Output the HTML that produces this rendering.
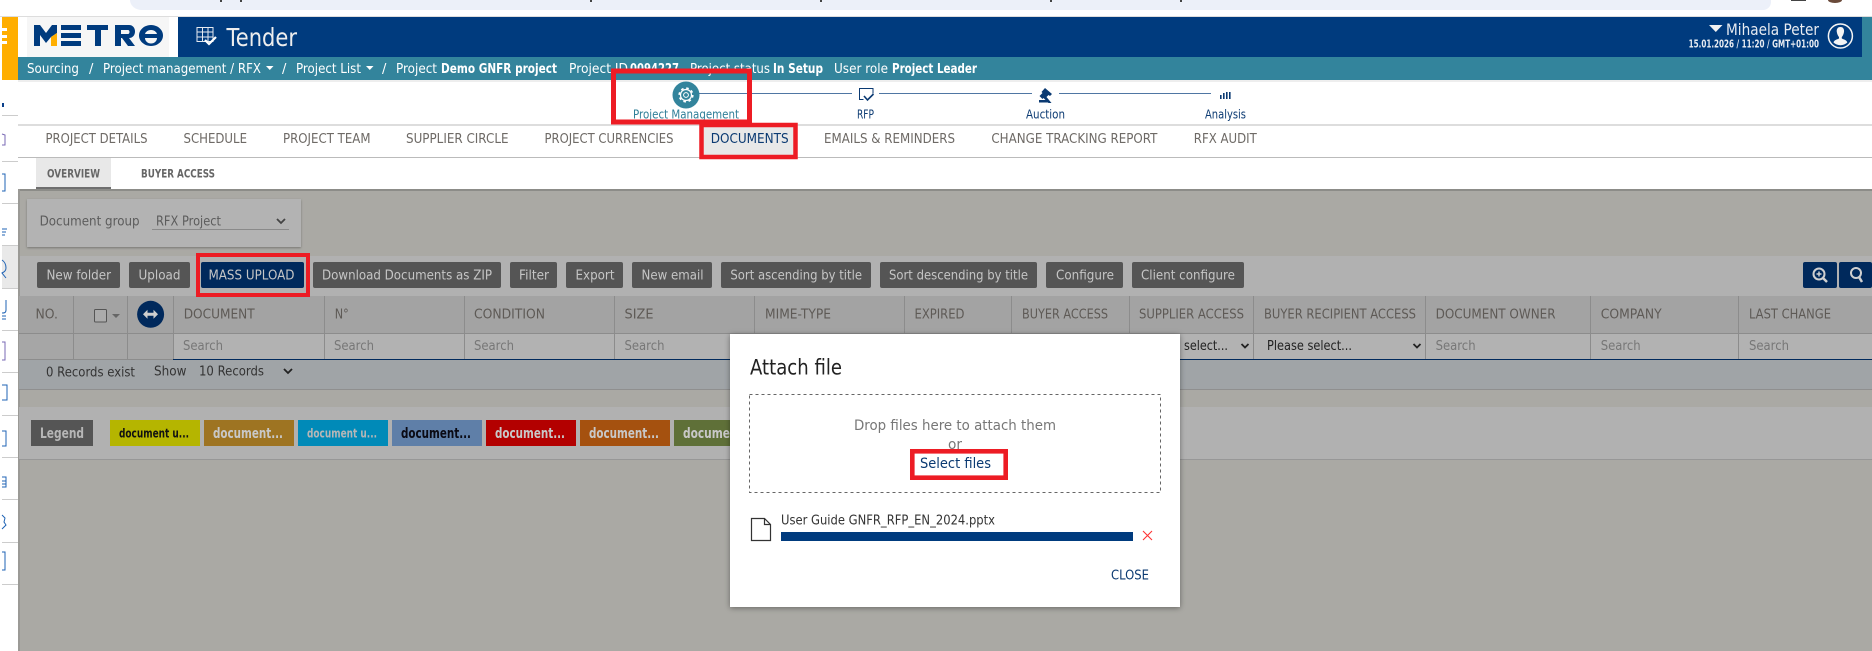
<!DOCTYPE html>
<html lang="en"><head><meta charset="utf-8"><title>Tender</title>
<style>
html,body{margin:0;padding:0;background:#fff;width:1872px;height:651px;overflow:hidden}
svg{display:block}
text{font-family:"DejaVu Sans","Liberation Sans",sans-serif;white-space:pre}
.t{font-size:13px;fill:#fff}
.b{font-weight:bold}
.tab{font-size:13px;fill:#6e6a66}
.btn{font-size:13.5px;fill:#c6c6c6}
.h{font-size:13px;fill:#5e5a56}
.s{font-size:13px;fill:#777}
.st{font-size:12px;fill:#0b3a72}
.blk{font-size:13.5px;fill:#333}
</style></head><body>
<svg width="1872" height="651" viewBox="0 0 1872 651" xmlns="http://www.w3.org/2000/svg">
<defs>
<filter id="m" x="-10%" y="-10%" width="120%" height="120%"><feDropShadow dx="0" dy="1" stdDeviation="3" flood-color="#000" flood-opacity=".4"/></filter>
<filter id="c" x="-5%" y="-10%" width="110%" height="125%"><feDropShadow dx="0" dy="1" stdDeviation="1" flood-color="#000" flood-opacity=".3"/></filter>
</defs>
<rect width="1872" height="651" fill="#fff"/>
<!-- browser strip -->
<path d="M130 0H1771V2a8 8 0 0 1-8 8H142a12 10 0 0 1-12-10z" fill="#ecf0f9"/>
<rect x="220" y="0" width="2" height="2" fill="#444"/><rect x="240" y="0" width="2" height="2" fill="#444"/>
<rect x="590" y="0" width="2" height="2" fill="#444"/><rect x="820" y="0" width="2" height="2" fill="#444"/><rect x="1050" y="0" width="2" height="2" fill="#444"/><rect x="1180" y="0" width="2" height="2" fill="#444"/>
<rect x="1791" y="0" width="15" height="1" fill="#444"/>
<path d="M1828 0h14a7 3 0 0 1-14 0z" fill="#6a4a3a"/>
<rect x="0" y="16" width="1872" height="1" fill="#ddd"/>

<!-- left rail -->
<rect x="0" y="17" width="2" height="634" fill="#fff"/>
<rect x="2" y="17" width="16" height="63" fill="#ffae00"/>
<rect x="2" y="28" width="5" height="3" fill="#fff"/><rect x="2" y="35" width="5" height="3" fill="#fff"/><rect x="2" y="41" width="5" height="3" fill="#fff"/>
<rect x="2" y="245" width="16" height="43" fill="#e9e9e9"/>
<g fill="#ccc">
<rect x="2" y="115" width="16" height="1"/><rect x="2" y="161" width="16" height="1"/><rect x="2" y="203" width="16" height="1"/><rect x="2" y="245" width="16" height="1"/><rect x="2" y="288" width="16" height="1"/><rect x="2" y="330" width="16" height="1"/><rect x="2" y="372" width="16" height="1"/><rect x="2" y="415" width="16" height="1"/><rect x="2" y="457" width="16" height="1"/><rect x="2" y="499" width="16" height="1"/><rect x="2" y="542" width="16" height="1"/><rect x="2" y="584" width="16" height="1"/>
</g>
<g fill="none" stroke="#1f63b5" stroke-width="1">
<path d="M2 134l3 1v10h-3" stroke="#7a6ab5"/>
<path d="M2 174h3v17h-3"/>
<path d="M2 229h5M2 232h4M2 235h3"/>
<path d="M2 260c3 2 4 5 4 8s-2 4-4 5l4 5"/>
<path d="M6 300v10c0 3-2 3-4 3M2 316h4M2 319h4"/>
<path d="M2 342h3v18h-3" stroke="#7a6ab5"/>
<path d="M2 385h5v15h-5"/>
<path d="M2 431h4v15h-4"/>
<path d="M2 477h4v10h-4M2 481h4M2 484h4"/>
<path d="M2 515l3 3-1 4 2 3-4 4"/>
<path d="M2 552h3v18h-3"/>
</g>
<rect x="2" y="103" width="2" height="4" fill="#0a3f8a"/>

<!-- header -->
<rect x="18" y="17" width="160" height="40" fill="#fff"/>
<rect x="27" y="17" width="142" height="40" fill="#f6f6f6"/>
<rect x="178" y="17" width="1684" height="40" fill="#003b7e"/>
<rect x="1862" y="17" width="10" height="40" fill="#33849c"/>
<!-- METRO logo -->
<g fill="#003b7e">
<path d="M34 46V25h6l6 8 6-8h5v8h0l-6 4-5 6-6-8v11z"/>
<rect x="61" y="25" width="20" height="5"/><rect x="61" y="33" width="20" height="5"/><rect x="61" y="41" width="20" height="5"/>
<rect x="87" y="25" width="21" height="5"/><rect x="95" y="25" width="6" height="21"/>
<path d="M115 25h14c8 0 8 13 0 13l6 8h-7l-6-8h-1v8h-6zM121 30v4h7c2 0 2-4 0-4z" fill-rule="evenodd"/>
<path d="M151 25a12 10.500 0 1 0 .01 0zM151 30a6 5.500 0 0 0-6 4h12a6 5.500 0 0 0-6-4zm-6 8a6 5.500 0 0 0 12 0z" fill-rule="evenodd"/>
</g>
<path d="M51 46V37l6-4v13z" fill="#ffae00"/>
<!-- Tender icon -->
<g fill="none" stroke="#e6eaf0" stroke-width="1">
<path d="M197 27.500h16v14h-16zM202.500 27.500v14M208 27.500v14M197 32h16M197 37h16"/>
</g>
<path d="M205 40l4 4 7-7" fill="none" stroke="#fff" stroke-width="2.200"/>
<text x="226.500" y="46" font-size="25" fill="#eee" textLength="70.500" lengthAdjust="spacingAndGlyphs">Tender</text>
<path d="M1709 25h13.500l-6.700 7z" fill="#f2f2f2"/>
<text x="1726" y="35" font-size="16" fill="#e8ecf2" textLength="93" lengthAdjust="spacingAndGlyphs">Mihaela Peter</text>
<text x="1688.600" y="47.500" font-size="11" font-weight="bold" fill="#e8ecf2" textLength="130.400" lengthAdjust="spacingAndGlyphs">15.01.2026 / 11:20 / GMT+01:00</text>
<circle cx="1840.400" cy="36" r="12" fill="none" stroke="#f4f4f4" stroke-width="1.500"/>
<path d="M1840.400 27c-3 0-4 2.500-3.600 5 .3 2 1.200 4 2.200 5v1.500c-2 1-5 1.500-5.500 4a10 10 0 0 0 13.800 0c-.5-2.500-3.500-3-5.500-4V37c1-1 1.900-3 2.200-5 .4-2.500-.6-5-3.600-5z" fill="#f4f4f4"/>

<!-- breadcrumb -->
<rect x="18" y="57" width="1854" height="23" fill="#33849c"/>
<g class="t">
<text class="t" x="27" y="73" textLength="52" lengthAdjust="spacingAndGlyphs">Sourcing</text>
<text class="t" x="89" y="73">/</text>
<text class="t" x="103" y="73" textLength="158" lengthAdjust="spacingAndGlyphs">Project management / RFX</text>
<path d="M266 66h7.500l-3.700 4z" fill="#fff"/>
<text class="t" x="282" y="73">/</text>
<text class="t" x="296" y="73" textLength="65" lengthAdjust="spacingAndGlyphs">Project List</text>
<path d="M366 66h7.500l-3.700 4z" fill="#fff"/>
<text class="t" x="382" y="73">/</text>
<text class="t" x="396" y="73" textLength="41" lengthAdjust="spacingAndGlyphs">Project</text>
<text class="t b" x="441" y="73" textLength="116" lengthAdjust="spacingAndGlyphs">Demo GNFR project</text>
<text class="t" x="569" y="73" textLength="59" lengthAdjust="spacingAndGlyphs">Project ID</text>
<text class="t b" x="630" y="73" textLength="49" lengthAdjust="spacingAndGlyphs">0094227</text>
<text class="t" x="690" y="73" textLength="80" lengthAdjust="spacingAndGlyphs">Project status</text>
<text class="t b" x="773" y="73" textLength="50" lengthAdjust="spacingAndGlyphs">In Setup</text>
<text class="t" x="834" y="73" textLength="54" lengthAdjust="spacingAndGlyphs">User role</text>
<text class="t b" x="892" y="73" textLength="85" lengthAdjust="spacingAndGlyphs">Project Leader</text>
</g>
<rect x="18" y="80" width="1854" height="2" fill="#eee"/>

<!-- stepper -->
<g stroke="#4f76a3" stroke-width="1">
<line x1="698" y1="93.500" x2="852" y2="93.500"/><line x1="879" y1="93.500" x2="1032" y2="93.500"/><line x1="1059" y1="93.500" x2="1211" y2="93.500"/>
</g>
<circle cx="686" cy="95" r="13.500" fill="#33849c"/>
<circle cx="686" cy="95" r="5.500" fill="none" stroke="#fff" stroke-width="1.200"/>
<circle cx="686" cy="95" r="6.800" fill="none" stroke="#fff" stroke-width="1.600" stroke-dasharray="2.600 2.740"/>
<circle cx="686" cy="95" r="2.400" fill="none" stroke="#fff" stroke-width="1"/>
<path d="M869 88.500h-9.500v11h4M869 88.500h4v5" fill="none" stroke="#0b3a72" stroke-width="1"/>
<path d="M864 96l3.500 4 6-6" fill="none" stroke="#0b3a72" stroke-width="1.600"/>
<path d="M1045 88l7 6-2 2-1.500-1-2 2 5 6h-3l-5-5-1 1-3-3 3-3-1-1z" fill="#0b3a72"/>
<rect x="1039" y="100" width="9" height="2.500" fill="#0b3a72"/>
<g fill="#0b3a72"><rect x="1220" y="95" width="1.600" height="4"/><rect x="1223" y="93" width="1.600" height="6"/><rect x="1226" y="92" width="1.600" height="7"/><rect x="1229" y="92" width="1.600" height="7"/></g>
<text class="st" x="633" y="118.500" style="fill:#2f7f98" textLength="106" lengthAdjust="spacingAndGlyphs">Project Management</text>
<text class="st" x="857" y="118.500" textLength="17" lengthAdjust="spacingAndGlyphs">RFP</text>
<text class="st" x="1026" y="118.500" textLength="39" lengthAdjust="spacingAndGlyphs">Auction</text>
<text class="st" x="1205" y="118.500" textLength="41" lengthAdjust="spacingAndGlyphs">Analysis</text>

<rect x="18" y="124" width="1854" height="2" fill="#ddd"/>
<!-- tabs -->
<rect x="703" y="127" width="91" height="28" fill="#e8e8e8"/>
<g>
<text class="tab" x="45.500" y="143" textLength="102" lengthAdjust="spacingAndGlyphs">PROJECT DETAILS</text>
<text class="tab" x="183.500" y="143" textLength="63.500" lengthAdjust="spacingAndGlyphs">SCHEDULE</text>
<text class="tab" x="283" y="143" textLength="87.500" lengthAdjust="spacingAndGlyphs">PROJECT TEAM</text>
<text class="tab" x="406" y="143" textLength="102.500" lengthAdjust="spacingAndGlyphs">SUPPLIER CIRCLE</text>
<text class="tab" x="544.500" y="143" textLength="129" lengthAdjust="spacingAndGlyphs">PROJECT CURRENCIES</text>
<text class="tab" x="710.700" y="143" style="fill:#0b3a72" textLength="78" lengthAdjust="spacingAndGlyphs">DOCUMENTS</text>
<text class="tab" x="824" y="143" textLength="131" lengthAdjust="spacingAndGlyphs">EMAILS &amp; REMINDERS</text>
<text class="tab" x="991.400" y="143" textLength="166" lengthAdjust="spacingAndGlyphs">CHANGE TRACKING REPORT</text>
<text class="tab" x="1193.800" y="143" textLength="63" lengthAdjust="spacingAndGlyphs">RFX AUDIT</text>
</g>
<rect x="18" y="157" width="1854" height="1" fill="#bbb"/>
<!-- sub tabs -->
<rect x="36" y="158" width="75" height="29" fill="#e8e8e8"/>
<rect x="36" y="187" width="75" height="2" fill="#6f6f6f"/>
<text x="47" y="177.300" font-size="11.500" font-weight="bold" fill="#666" textLength="53" lengthAdjust="spacingAndGlyphs">OVERVIEW</text>
<text x="141" y="177.300" font-size="11.500" font-weight="bold" fill="#666" textLength="74" lengthAdjust="spacingAndGlyphs">BUYER ACCESS</text>

<!-- overlay -->
<rect x="18" y="189" width="1854" height="462" fill="#aaa9a4"/>
<rect x="18" y="189" width="1854" height="2" fill="#8c8c88"/>
<rect x="18" y="189" width="2" height="462" fill="#9b9a96"/>
<!-- doc group -->
<rect x="27" y="199" width="274" height="48" fill="#b3b3b3" filter="url(#c)"/>
<text x="39.600" y="225.500" font-size="13.500" fill="#5c5c5c" textLength="100" lengthAdjust="spacingAndGlyphs">Document group</text>
<text x="156" y="225.500" font-size="13.500" fill="#5c5c5c" textLength="65" lengthAdjust="spacingAndGlyphs">RFX Project</text>
<rect x="152" y="229" width="137" height="1" fill="#8a8a8a"/>
<path d="M277 219l4 4 4-4" fill="none" stroke="#444" stroke-width="1.800"/>

<!-- toolbar -->
<rect x="20" y="256" width="1852" height="40" fill="#b1b1b1"/>
<g fill="#555">
<rect x="37" y="262" width="83" height="26" rx="2"/><rect x="129" y="262" width="61" height="26" rx="2"/>
<rect x="313" y="262" width="188" height="26" rx="2"/><rect x="510" y="262" width="47" height="26" rx="2"/><rect x="566" y="262" width="57" height="26" rx="2"/><rect x="632" y="262" width="80" height="26" rx="2"/><rect x="721" y="262" width="150" height="26" rx="2"/><rect x="880" y="262" width="157" height="26" rx="2"/><rect x="1046" y="262" width="77" height="26" rx="2"/><rect x="1132" y="262" width="112" height="26" rx="2"/>
</g>
<rect x="201" y="262" width="103" height="26" rx="2" fill="#00295c"/>
<text class="btn" x="46.500" y="279.700" textLength="64.500" lengthAdjust="spacingAndGlyphs">New folder</text>
<text class="btn" x="138.500" y="279.700" textLength="42" lengthAdjust="spacingAndGlyphs">Upload</text>
<text class="btn" x="208.500" y="279.700" textLength="86" lengthAdjust="spacingAndGlyphs">MASS UPLOAD</text>
<text class="btn" x="322" y="279.700" textLength="170" lengthAdjust="spacingAndGlyphs">Download Documents as ZIP</text>
<text class="btn" x="519" y="279.700" textLength="30" lengthAdjust="spacingAndGlyphs">Filter</text>
<text class="btn" x="575.500" y="279.700" textLength="39" lengthAdjust="spacingAndGlyphs">Export</text>
<text class="btn" x="641.500" y="279.700" textLength="62" lengthAdjust="spacingAndGlyphs">New email</text>
<text class="btn" x="730.400" y="279.700" textLength="131.600" lengthAdjust="spacingAndGlyphs">Sort ascending by title</text>
<text class="btn" x="889" y="279.700" textLength="139" lengthAdjust="spacingAndGlyphs">Sort descending by title</text>
<text class="btn" x="1056" y="279.700" textLength="58" lengthAdjust="spacingAndGlyphs">Configure</text>
<text class="btn" x="1141" y="279.700" textLength="94" lengthAdjust="spacingAndGlyphs">Client configure</text>
<rect x="1803" y="262" width="34" height="26" rx="2" fill="#00295c"/>
<rect x="1839" y="262" width="33" height="26" rx="2" fill="#00295c"/>
<circle cx="1819" cy="274" r="5.500" fill="none" stroke="#d0d0d0" stroke-width="2"/>
<path d="M1816.500 274h5M1819 271.500v5" stroke="#d0d0d0" stroke-width="1.500"/>
<path d="M1823 278l4 4" stroke="#d0d0d0" stroke-width="2.500"/>
<circle cx="1856" cy="273" r="5" fill="none" stroke="#d0d0d0" stroke-width="2"/>
<path d="M1859 277l3 5" stroke="#d0d0d0" stroke-width="2.500"/>

<!-- table -->
<rect x="19" y="296" width="1853" height="37" fill="#a3a3a3"/>
<rect x="19" y="333" width="154" height="26" fill="#a6a6a6"/>
<rect x="173" y="333" width="1699" height="26" fill="#b2b2b2"/>
<rect x="19" y="333" width="1853" height="1" fill="#8c8c8c"/>
<rect x="173" y="359" width="1699" height="1" fill="#00295c"/>
<rect x="19" y="359" width="154" height="1" fill="#8c8c8c"/>
<g fill="#8c8c8c">
<rect x="73" y="296" width="1" height="63"/><rect x="127" y="296" width="1" height="63"/><rect x="173" y="296" width="1" height="63"/><rect x="324" y="296" width="1" height="63"/><rect x="464" y="296" width="1" height="63"/><rect x="614" y="296" width="1" height="63"/><rect x="754" y="296" width="1" height="63"/><rect x="904" y="296" width="1" height="63"/><rect x="1011" y="296" width="1" height="63"/><rect x="1129" y="296" width="1" height="63"/><rect x="1253" y="296" width="1" height="63"/><rect x="1425" y="296" width="1" height="63"/><rect x="1590" y="296" width="1" height="63"/><rect x="1738" y="296" width="1" height="63"/>
</g>
<text class="h" x="35.500" y="318.500" textLength="22.500" lengthAdjust="spacingAndGlyphs">NO.</text>
<rect x="94.500" y="309.500" width="12" height="12.500" rx="1" fill="#ababab" stroke="#555"/>
<path d="M112 314h8l-4 4z" fill="#666"/>
<circle cx="150.600" cy="314.300" r="13.500" fill="#00295c"/>
<path d="M143 314.300l4.500-4.500v3h6v-3l4.500 4.500-4.500 4.500v-3h-6v3z" fill="#cfcfcf"/>
<text class="h" x="183.700" y="318.500" textLength="71" lengthAdjust="spacingAndGlyphs">DOCUMENT</text>
<text class="h" x="334.700" y="318.500" textLength="14" lengthAdjust="spacingAndGlyphs">N°</text>
<text class="h" x="474" y="318.500" textLength="71" lengthAdjust="spacingAndGlyphs">CONDITION</text>
<text class="h" x="624.500" y="318.500" textLength="29" lengthAdjust="spacingAndGlyphs">SIZE</text>
<text class="h" x="765" y="318.500" textLength="66" lengthAdjust="spacingAndGlyphs">MIME-TYPE</text>
<text class="h" x="914.500" y="318.500" textLength="50" lengthAdjust="spacingAndGlyphs">EXPIRED</text>
<text class="h" x="1022" y="318.500" textLength="86" lengthAdjust="spacingAndGlyphs">BUYER ACCESS</text>
<text class="h" x="1139" y="318.500" textLength="105" lengthAdjust="spacingAndGlyphs">SUPPLIER ACCESS</text>
<text class="h" x="1264" y="318.500" textLength="152" lengthAdjust="spacingAndGlyphs">BUYER RECIPIENT ACCESS</text>
<text class="h" x="1435.600" y="318.500" textLength="120" lengthAdjust="spacingAndGlyphs">DOCUMENT OWNER</text>
<text class="h" x="1600.700" y="318.500" textLength="61" lengthAdjust="spacingAndGlyphs">COMPANY</text>
<text class="h" x="1749" y="318.500" textLength="82" lengthAdjust="spacingAndGlyphs">LAST CHANGE</text>
<text class="s" x="183" y="350" textLength="40" lengthAdjust="spacingAndGlyphs">Search</text>
<text class="s" x="334" y="350" textLength="40" lengthAdjust="spacingAndGlyphs">Search</text>
<text class="s" x="474" y="350" textLength="40" lengthAdjust="spacingAndGlyphs">Search</text>
<text class="s" x="624.500" y="350" textLength="40" lengthAdjust="spacingAndGlyphs">Search</text>
<text class="s" x="1435.600" y="350" textLength="40" lengthAdjust="spacingAndGlyphs">Search</text>
<text class="s" x="1600.700" y="350" textLength="40" lengthAdjust="spacingAndGlyphs">Search</text>
<text class="s" x="1749" y="350" textLength="40" lengthAdjust="spacingAndGlyphs">Search</text>
<text x="1184" y="350" font-size="13" fill="#222" textLength="44" lengthAdjust="spacingAndGlyphs">select...</text>
<path d="M1241.500 344l3.500 3.500 3.500-3.500" fill="none" stroke="#222" stroke-width="1.800"/>
<text x="1267" y="350" font-size="13" fill="#222" textLength="85" lengthAdjust="spacingAndGlyphs">Please select...</text>
<path d="M1413.500 344l3.500 3.500 3.500-3.500" fill="none" stroke="#222" stroke-width="1.800"/>

<!-- records -->
<rect x="19" y="360" width="1853" height="29" fill="#a0a4a7"/>
<rect x="19" y="389" width="1853" height="1" fill="#8f8f8f"/>
<text class="blk" x="46" y="376.700" textLength="89" lengthAdjust="spacingAndGlyphs">0 Records exist</text>
<text class="blk" x="154" y="375.700" textLength="32.500" lengthAdjust="spacingAndGlyphs">Show</text>
<text class="blk" x="199" y="375.700" textLength="65" lengthAdjust="spacingAndGlyphs">10 Records</text>
<path d="M284 369l4 4 4-4" fill="none" stroke="#222" stroke-width="1.800"/>

<!-- legend -->
<rect x="19" y="407" width="1853" height="52" fill="#b1b1b1"/>
<rect x="19" y="459" width="1853" height="1" fill="#979797"/>
<rect x="31" y="420" width="62" height="26" fill="#555"/>
<text x="40" y="438" font-size="14" font-weight="bold" fill="#b6b6b6" textLength="44" lengthAdjust="spacingAndGlyphs">Legend</text>
<rect x="110" y="420" width="90" height="26" fill="#b5b500"/>
<text x="119" y="437.500" font-size="12.500" font-weight="bold" fill="#111" textLength="70" lengthAdjust="spacingAndGlyphs">document u...</text>
<rect x="204" y="420" width="90" height="26" fill="#9e7422"/>
<text x="213" y="438" font-size="14" font-weight="bold" fill="#c8c8c8" textLength="70" lengthAdjust="spacingAndGlyphs">document...</text>
<rect x="298" y="420" width="90" height="26" fill="#008ab8"/>
<text x="307" y="437.500" font-size="12.500" font-weight="bold" fill="#b6b6b6" textLength="70" lengthAdjust="spacingAndGlyphs">document u...</text>
<rect x="392" y="420" width="90" height="26" fill="#5f7fa8"/>
<text x="401" y="438" font-size="14" font-weight="bold" fill="#0a0a14" textLength="70" lengthAdjust="spacingAndGlyphs">document...</text>
<rect x="486" y="420" width="90" height="26" fill="#b30000"/>
<text x="495" y="438" font-size="14" font-weight="bold" fill="#c8c8c8" textLength="70" lengthAdjust="spacingAndGlyphs">document...</text>
<rect x="580" y="420" width="90" height="26" fill="#a5510f"/>
<text x="589" y="438" font-size="14" font-weight="bold" fill="#c8c8c8" textLength="70" lengthAdjust="spacingAndGlyphs">document...</text>
<rect x="674" y="420" width="60" height="26" fill="#5f7038"/>
<text x="683" y="438" font-size="14" font-weight="bold" fill="#c8c8c8" textLength="47" lengthAdjust="spacingAndGlyphs">docume</text>

<!-- modal -->
<rect x="730" y="334" width="450" height="273" fill="#fff" filter="url(#m)"/>
<text x="750" y="374.500" font-size="21" fill="#222" textLength="92" lengthAdjust="spacingAndGlyphs">Attach file</text>
<rect x="749.500" y="394.500" width="411" height="98" fill="none" stroke="#666" stroke-width="1" stroke-dasharray="3 3"/>
<text x="854" y="430" font-size="14.500" fill="#777" textLength="202" lengthAdjust="spacingAndGlyphs">Drop files here to attach them</text>
<text x="948" y="449" font-size="14.500" fill="#777" textLength="14" lengthAdjust="spacingAndGlyphs">or</text>
<text x="920" y="468" font-size="14.500" fill="#0b3a72" textLength="71" lengthAdjust="spacingAndGlyphs">Select files</text>
<path d="M751.500 518.500h13l6 6v16h-19z M764.500 518.500v6h6" fill="none" stroke="#333" stroke-width="1.200"/>
<text x="781" y="524.700" font-size="13" fill="#333" textLength="214" lengthAdjust="spacingAndGlyphs">User Guide GNFR_RFP_EN_2024.pptx</text>
<rect x="781" y="532" width="352" height="9" fill="#003b7e"/>
<path d="M1143 531l9 9M1152 531l-9 9" stroke="#f33" stroke-width="1.100"/>
<text x="1111" y="579.700" font-size="13" fill="#0b3a72" textLength="38" lengthAdjust="spacingAndGlyphs">CLOSE</text>

<!-- red annotations -->
<g fill="none" stroke="#ed1c24">
<rect x="613.500" y="71" width="136" height="51" stroke-width="5"/>
<rect x="701.500" y="125" width="94" height="32" stroke-width="4.500"/>
<rect x="198" y="255" width="110" height="40" stroke-width="4"/>
<rect x="912.300" y="451.300" width="93.400" height="26.400" stroke-width="4.600"/>
</g>
</svg>
</body></html>
